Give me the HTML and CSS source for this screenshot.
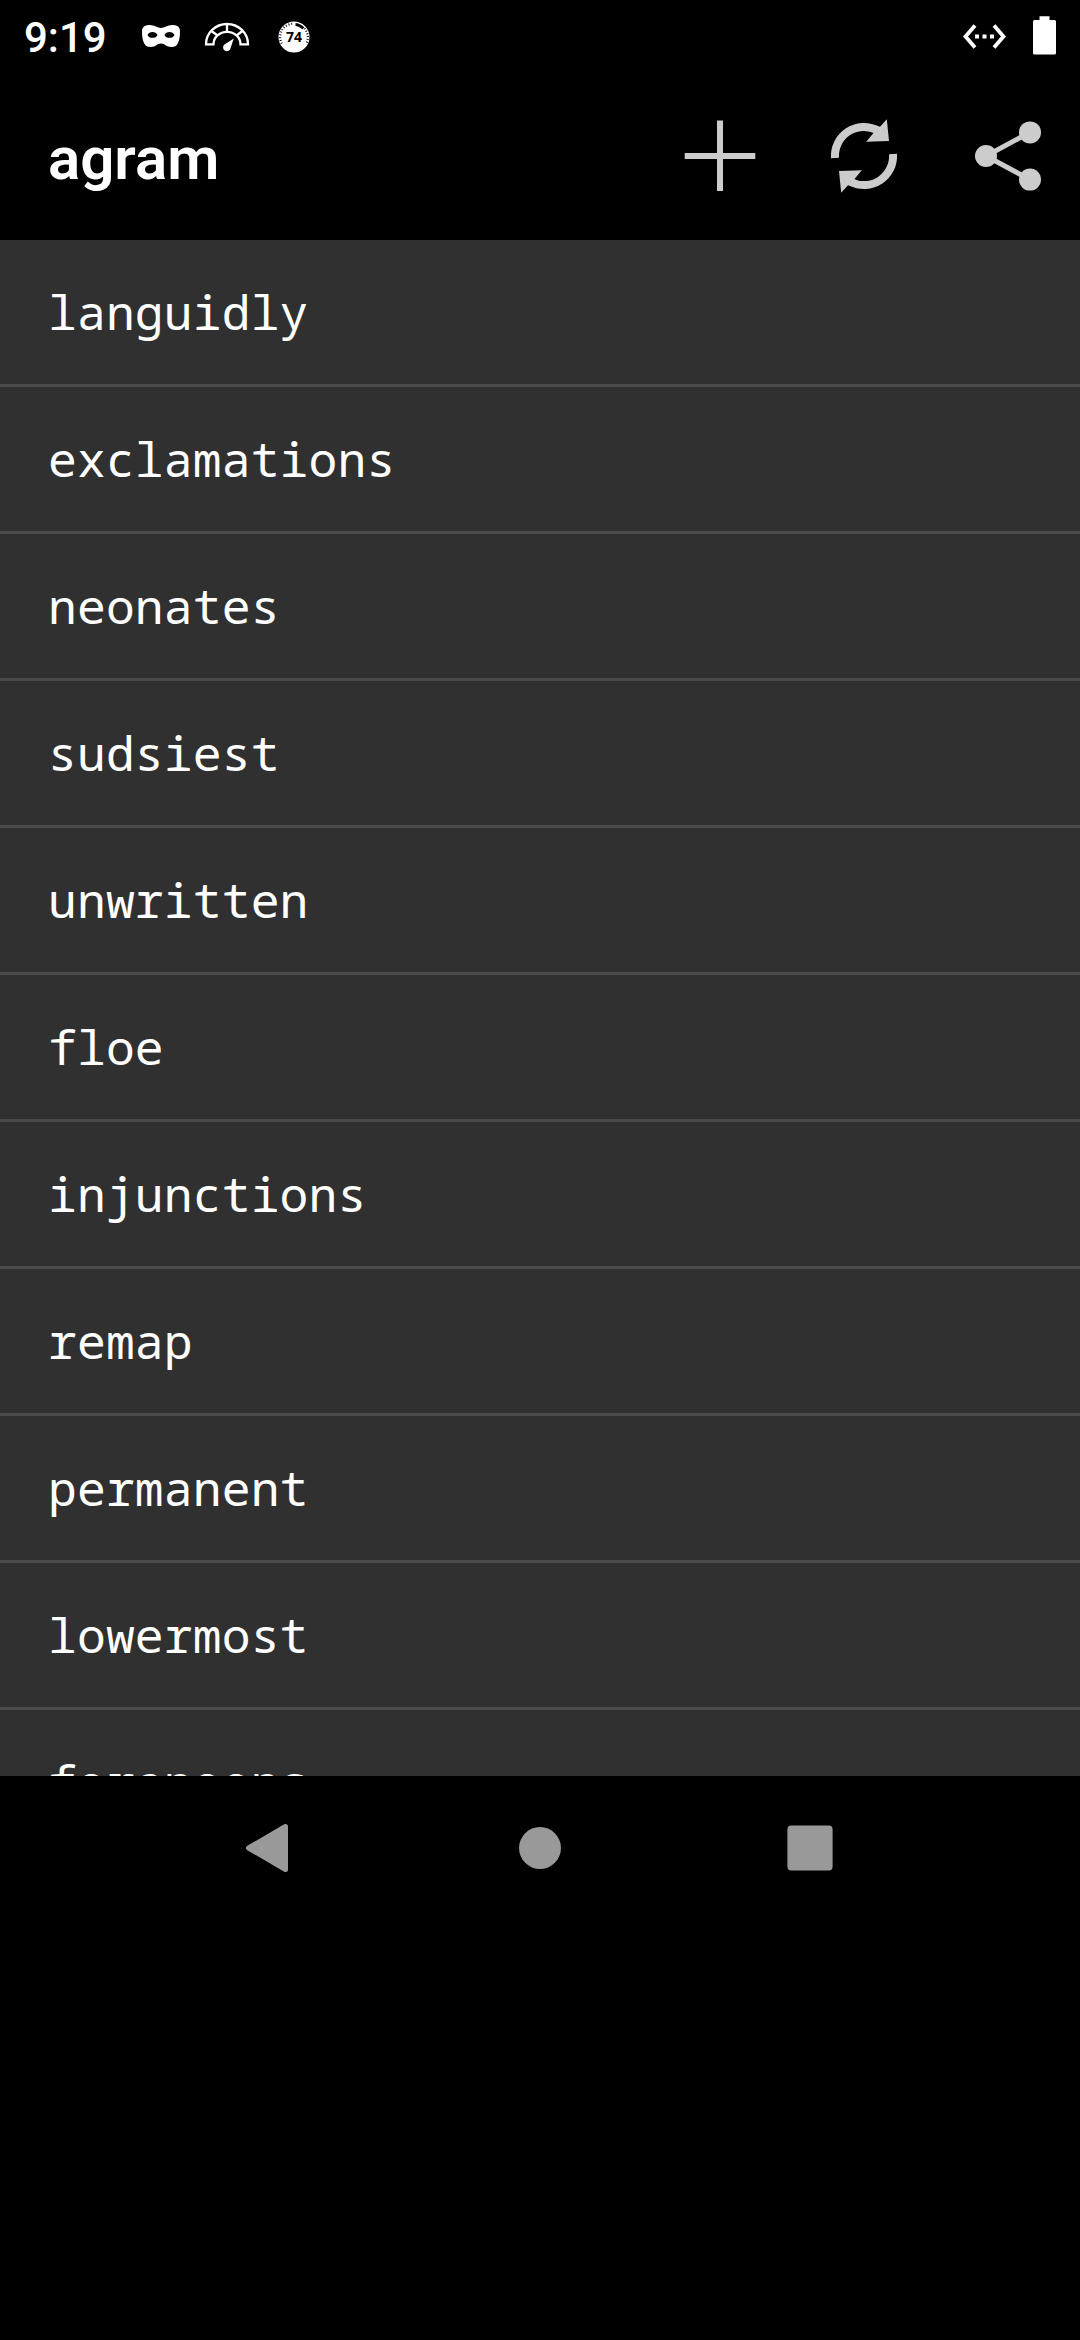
FILE: index.html
```
<!DOCTYPE html>
<html lang="en">
<head>
<meta charset="utf-8">
<title>agram</title>
<link rel="stylesheet" href="styles.css">
</head>
<body>
<div class="screen">
  <header class="status-bar">
    <span class="clock">9:19</span>
    <svg class="status-icons" width="120" height="40" viewBox="137 16 120 40" aria-hidden="true">
      <path fill="#fff" fill-rule="evenodd" d="M142 31C142 27 145 25 149.500 25C155 25 157.500 28 161 28C164.500 28 167 25 172.500 25C177 25 180 27 180 31C180 36 179.500 40 178 43C176.500 46 174.500 47 171.500 47C166 47 165 43.500 161 43.500C157 43.500 156 47 150.500 47C147.500 47 145.500 46 144 43C142.500 40 142 36 142 31ZM147.500 35C149 38.800 156 38.800 157.500 35C156 31 149 31 147.500 35ZM164.500 35C166 38.800 173 38.800 174.500 35C173 31 166 31 164.500 35Z"/>
      <g fill="none" stroke="#fff" stroke-width="2.300">
        <path d="M206 44.300A21 20.300 0 0 1 248 44.300H240.500A13.500 12.500 0 0 0 213.500 44.300Z"/>
        <path d="M227 24V31.500M211.500 31L217.500 35.500M242.500 31L236.500 35.500"/>
      </g>
      <path fill="#fff" d="M233.800 38.600L230.600 48A3.800 3.800 0 1 1 224.100 44.800Z"/>
    </svg>
    <svg class="badge-icon" width="32" height="32" viewBox="-16 -16 32 32" aria-hidden="true">
      <circle r="15.500" fill="#fff"/>
      <path d="M-12.200 6.500A13.300 13.300 0 0 1 0 -13.300M10.500 -8.500A13.300 13.300 0 0 1 12.200 6.500" fill="none" stroke="#000" stroke-width="2.200" stroke-dasharray="0.900 1.900"/>
      <path d="M1.500 -12.600A12.700 12.700 0 0 1 9.300 -8.600" fill="none" stroke="#000" stroke-width="2.800"/>
      <text class="badge-text" x="0" y="5.200" text-anchor="middle">74</text>
    </svg>
    <svg class="system-icons" width="100" height="48" viewBox="960 12 100 48" aria-hidden="true">
      <path d="M975 25.500L965.500 36.500L975 47.500M994 25.500L1003.500 36.500L994 47.500" fill="none" stroke="#fff" stroke-width="3.800"/>
      <path fill="#fff" d="M975 34.500h4v4h-4zM982.500 34.500h4v4h-4zM990 34.500h4v4h-4zM1039.500 20V16.300H1049.500V20H1054.500Q1056 20 1056 21.500V53Q1056 54.500 1054.500 54.500H1034.500Q1033 54.500 1033 53V21.500Q1033 20 1034.500 20Z"/>
    </svg>
  </header>
  <div class="app-bar">
    <h1 class="title">agram</h1>
    <nav class="actions">
      <svg width="144" height="96" viewBox="-72 -48 144 96" aria-label="Add"><path fill="#ccc" d="M-3 -35.500H3V-3H35.300V3H3V35H-3V3H-35.300V-3H-3Z"/></svg>
      <svg width="144" height="96" viewBox="-72 -48 144 96" aria-label="Refresh">
        <g id="arrow">
          <path d="M-29 2A29 29 0 0 1 13 -26" fill="none" stroke="#ccc" stroke-width="8"/>
          <path fill="#ccc" d="M22.800 -36.700L25 -15L2.200 -14.300L9.500 -23L12 -30.500L16 -29.200Z"/>
        </g>
        <use href="#arrow" transform="rotate(180)"/>
      </svg>
      <svg width="144" height="96" viewBox="-72 -48 144 96" aria-label="Share">
        <path d="M22 -23.700L-22 0L22 23.600" fill="none" stroke="#ccc" stroke-width="5"/>
        <g fill="#ccc"><circle cx="-22" r="11"/><circle cx="22" cy="-23.600" r="11"/><circle cx="22" cy="23.600" r="11"/></g>
      </svg>
    </nav>
  </div>
  <ul class="words">
    <li>languidly</li>
    <li>exclamations</li>
    <li>neonates</li>
    <li>sudsiest</li>
    <li>unwritten</li>
    <li>floe</li>
    <li>injunctions</li>
    <li>remap</li>
    <li>permanent</li>
    <li>lowermost</li>
    <li>forenoons</li>
  </ul>
  <footer class="nav-bar">
    <svg width="270" height="144" viewBox="-135 -72 270 144" aria-label="Back"><path d="M15.500 -21.500V21.500L-21.500 0Z" fill="#999" stroke="#999" stroke-width="5" stroke-linejoin="round"/></svg>
    <svg width="270" height="144" viewBox="-135 -72 270 144" aria-label="Home"><circle r="21" fill="#999"/></svg>
    <svg width="270" height="144" viewBox="-135 -72 270 144" aria-label="Recents"><rect x="-22.600" y="-22.600" width="45.200" height="45.200" rx="4" fill="#999"/></svg>
  </footer>
</div>
</body>
</html>
```
FILE: styles.css
```
body {
  margin: 0;
  background: #000;
  color: #fff;
}

svg {
  display: block;
  flex: none;
}

.screen {
  display: flex;
  flex-direction: column;
  width: 1080px;
  height: 2340px;
  overflow: hidden;
  font-family: Roboto, sans-serif;
}

.status-bar {
  display: flex;
  align-items: center;
  box-sizing: border-box;
  height: 72px;
  padding: 0 20px 0 24px;
}

.clock {
  width: 113px;
  padding-top: 3px;
  font-size: 42px;
  font-weight: 500;
  line-height: 72px;
  white-space: nowrap;
}

.badge-icon {
  margin: 1px 0 0 21px;
}

.badge-text {
  font: 700 14px "Open Sans", sans-serif;
}

.system-icons {
  margin-left: auto;
}

.app-bar {
  display: flex;
  align-items: center;
  justify-content: space-between;
  height: 168px;
}

.title {
  margin: 0;
  padding: 5px 0 0 48px;
  font-size: 60px;
  font-weight: 600;
  line-height: 1.2;
}

.actions {
  display: flex;
  height: 96px;
}

.words {
  height: 1536px;
  margin: 0;
  padding: 0;
  overflow: hidden;
  list-style: none;
  background: #303030;
  font: 48px "Noto Sans Mono", "Liberation Mono", monospace;
  letter-spacing: 0.15px;
}

.words li {
  height: 144px;
  padding-left: 48px;
  border-bottom: 3px solid #4a4a4a;
  line-height: 144px;
}

.nav-bar {
  display: flex;
  justify-content: center;
  height: 144px;
}
```
